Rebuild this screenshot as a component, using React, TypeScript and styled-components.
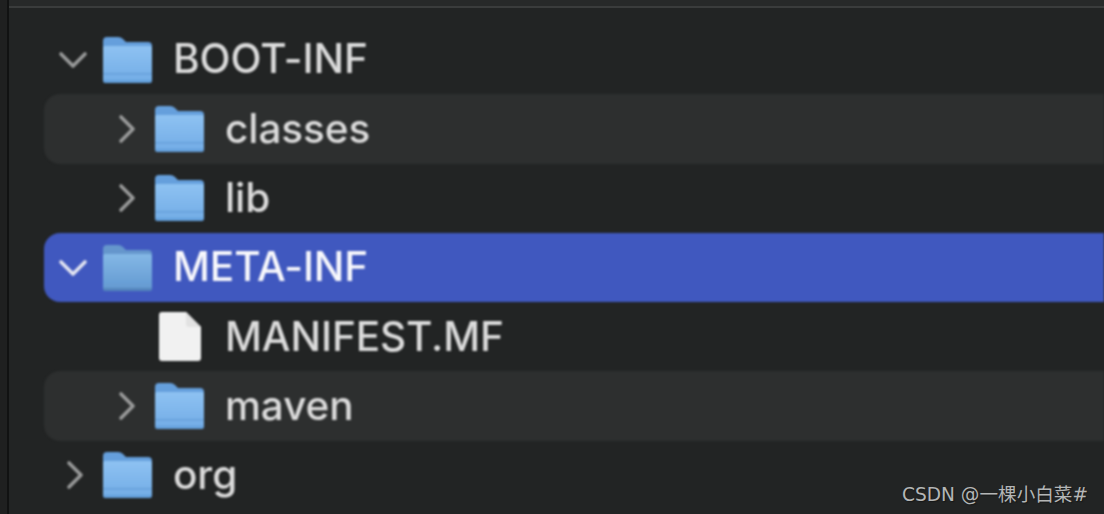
import React from "react";
import styled, { createGlobalStyle } from "styled-components";

const GlobalStyle = createGlobalStyle`
  html, body {
    margin: 0;
    padding: 0;
    background: #222424;
    overflow: hidden;
  }
`;

const Window = styled.div`
  position: relative;
  width: 1104px;
  height: 514px;
  overflow: hidden;
  display: flex;
  background: #222424;
  font-family: Inter, "Liberation Sans", sans-serif;
`;

const SideEdge = styled.div`
  flex: 0 0 9px;
  background: #1f2020;
  border-right: 2px solid #111212;
  box-sizing: border-box;
`;

const Main = styled.div`
  flex: 1;
  min-width: 0;
  display: flex;
  flex-direction: column;
`;

const TopEdge = styled.div`
  flex: 0 0 8px;
  box-sizing: border-box;
  background: #272929;
  border-bottom: 2px solid #3a3c3c;
`;

const List = styled.ul`
  list-style: none;
  margin: 0;
  padding: 17px 0 0 35px;
  filter: blur(0.8px);
`;

const Row = styled.li<{ $level: number; $tone: "plain" | "stripe" | "selected" }>`
  height: 69.3px;
  display: flex;
  align-items: center;
  box-sizing: border-box;
  padding-left: ${({ $level }) => 14 + $level * 52}px;
  border-radius: 16px 0 0 16px;
  background: ${({ $tone }) =>
    $tone === "selected" ? "#4058bf" : $tone === "stripe" ? "#2d2f2f" : "transparent"};
  color: ${({ $tone }) => ($tone === "selected" ? "#f8f8fc" : "#dcdcdc")};
`;

const ChevronSlot = styled.span<{ $open: boolean }>`
  flex: 0 0 45px;
  height: 30px;
  display: flex;
  align-items: center;
  padding-left: ${({ $open }) => ($open ? 0 : 2)}px;
  box-sizing: border-box;
`;

const IconSlot = styled.span`
  flex: 0 0 49px;
  height: 46px;
  display: flex;
  align-items: center;
  justify-content: center;
`;

const Label = styled.span`
  margin-left: 21px;
  font-size: 40.5px;
  line-height: 1;
  font-weight: 500;
  letter-spacing: -0.1px;
  white-space: nowrap;
`;

const Watermark = styled.div`
  position: absolute;
  right: 16px;
  bottom: 8px;
  font-family: "DejaVu Sans", "Noto Sans CJK SC", sans-serif;
  font-size: 18.6px;
  line-height: 22px;
  color: #b4b6b6;
  text-shadow: 1px 1px 1px #161717;
  white-space: nowrap;
`;

const Chevron = ({ open, color }: { open: boolean; color: string }) => (
  <svg width="30" height="30" viewBox="0 0 30 30" fill="none">
    <path
      d={open ? "M3 9 L15 21 L27 9" : "M9 3 L21 15 L9 27"}
      stroke={color}
      strokeWidth="3.6"
      strokeLinecap="round"
      strokeLinejoin="round"
    />
  </svg>
);

const Folder = ({ id, muted }: { id: string; muted: boolean }) => (
  <svg width="49" height="46" viewBox="0 0 49 46">
    <defs>
      <linearGradient id={id} x1="0" y1="0" x2="0" y2="1">
        <stop offset="0" stopColor={muted ? "#84b8e6" : "#8ec2f2"} />
        <stop offset="1" stopColor={muted ? "#6298d0" : "#72ace6"} />
      </linearGradient>
    </defs>
    <path
      d="M0 4 Q0 0 4 0 H15 Q18 0 20 2 L23 5 H45 Q49 5 49 9 V20 H0 Z"
      fill={muted ? "#6596cc" : "#659fdc"}
    />
    <path
      d="M0 11 Q0 9 2 9 H47 Q49 9 49 11 V43 Q49 46 46 46 H3 Q0 46 0 43 Z"
      fill={`url(#${id})`}
    />
    <rect x="0" y="36" width="49" height="1.5" fill="#669fd9" />
    <path d="M0 43 H49 Q49 46 46 46 H3 Q0 46 0 43 Z" fill={muted ? "#5486bc" : "#64a0dc"} />
  </svg>
);

const DocumentIcon = () => (
  <svg width="42" height="49" viewBox="0 0 42 49">
    <path
      d="M3 0 H27 L42 15 V46 Q42 49 39 49 H3 Q0 49 0 46 V3 Q0 0 3 0 Z"
      fill="#f1f1f1"
    />
    <path d="M27 0 L42 15 H30 Q27 15 27 12 Z" fill="#e2e2e2" />
  </svg>
);

type Entry = {
  name: string;
  level: number;
  kind: "folder" | "file";
  open?: boolean;
  tone: "plain" | "stripe" | "selected";
};

const entries: Entry[] = [
  { name: "BOOT-INF", level: 0, kind: "folder", open: true, tone: "plain" },
  { name: "classes", level: 1, kind: "folder", open: false, tone: "stripe" },
  { name: "lib", level: 1, kind: "folder", open: false, tone: "plain" },
  { name: "META-INF", level: 0, kind: "folder", open: true, tone: "selected" },
  { name: "MANIFEST.MF", level: 1, kind: "file", tone: "plain" },
  { name: "maven", level: 1, kind: "folder", open: false, tone: "stripe" },
  { name: "org", level: 0, kind: "folder", open: false, tone: "plain" },
];

export default function App() {
  return (
    <>
      <GlobalStyle />
      <Window>
        <SideEdge />
        <Main>
          <TopEdge />
          <List>
            {entries.map((entry) => (
              <Row key={entry.name} $level={entry.level} $tone={entry.tone}>
                <ChevronSlot $open={!!entry.open}>
                  {entry.kind === "folder" && (
                    <Chevron
                      open={!!entry.open}
                      color={entry.tone === "selected" ? "#e4e6f2" : "#9a9b9b"}
                    />
                  )}
                </ChevronSlot>
                <IconSlot>
                  {entry.kind === "folder" ? (
                    <Folder id={`fold-${entry.name}`} muted={entry.tone === "selected"} />
                  ) : (
                    <DocumentIcon />
                  )}
                </IconSlot>
                <Label>{entry.name}</Label>
              </Row>
            ))}
          </List>
        </Main>
        <Watermark>CSDN @一棵小白菜#</Watermark>
      </Window>
    </>
  );
}
